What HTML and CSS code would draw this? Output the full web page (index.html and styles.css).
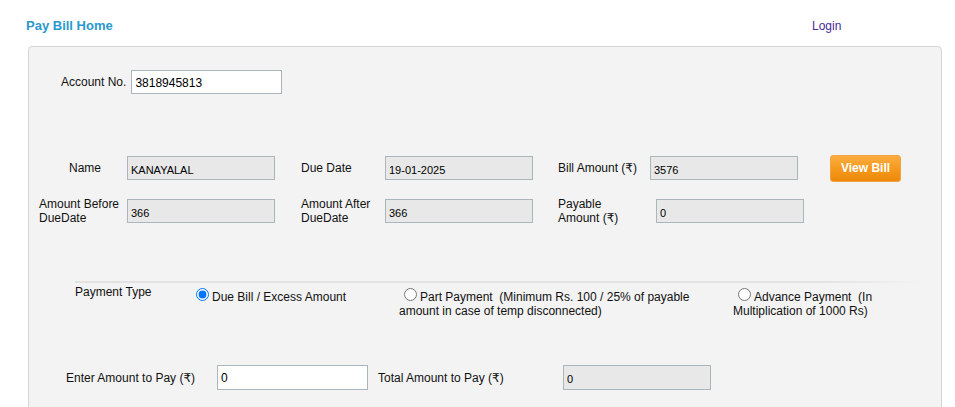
FILE: index.html
```html
<!DOCTYPE html>
<html lang="en">
<head>
<meta charset="utf-8">
<title>Pay Bill Home</title>
<link rel="stylesheet" href="styles.css">
</head>
<body>
<div class="header">
  <div class="title">Pay Bill Home</div>
  <a class="login" href="#">Login</a>
</div>
<div class="panel">
  <div class="row row-acct">
    <label class="lbl lbl-acct">Account No.</label>
    <input class="inp inp-edit" type="text" value="3818945813">
  </div>

  <div class="row row-1">
    <label class="lbl c1 c1-name">Name</label>
    <input class="inp inp-ro" type="text" readonly value="KANAYALAL">
    <label class="lbl c2">Due Date</label>
    <input class="inp inp-ro" type="text" readonly value="19-01-2025">
    <label class="lbl c3 c3-bill">Bill Amount (₹)</label>
    <input class="inp inp-ro" type="text" readonly value="3576">
    <button class="btn" type="button">View Bill</button>
  </div>

  <div class="row row-2">
    <label class="lbl c1 c1-before">Amount Before<br>DueDate</label>
    <input class="inp inp-ro" type="text" readonly value="366">
    <label class="lbl c2">Amount After<br>DueDate</label>
    <input class="inp inp-ro" type="text" readonly value="366">
    <label class="lbl c3 c3-pay">Payable<br>Amount (₹)</label>
    <input class="inp inp-ro" type="text" readonly value="0">
  </div>

  <div class="sep"></div>

  <div class="pay-row">
    <div class="lbl pt-label">Payment Type</div>
    <label class="opt opt-1"><input class="radio" type="radio" name="ptype" checked>Due Bill / Excess Amount</label>
    <label class="opt opt-2"><input class="radio" type="radio" name="ptype">Part Payment&nbsp; (Minimum Rs. 100 / 25% of payable amount in case of temp disconnected)</label>
    <label class="opt opt-3"><input class="radio" type="radio" name="ptype">Advance Payment&nbsp; (In Multiplication of 1000 Rs)</label>
  </div>

  <div class="row row-amt">
    <label class="lbl lbl-enter">Enter Amount to Pay (₹)</label>
    <input class="inp inp-edit inp-tall" type="text" value="0">
    <label class="lbl lbl-total">Total Amount to Pay (₹)</label>
    <input class="inp inp-ro inp-tall" type="text" readonly value="0">
  </div>
</div>
</body>
</html>
```
FILE: styles.css
```css
* {
  box-sizing: border-box;
}

html, body {
  margin: 0;
  padding: 0;
  background: #ffffff;
}

body {
  font-family: "Liberation Sans", Arial, "DejaVu Sans", sans-serif;
  font-size: 12px;
  color: #111111;
}

.header {
  display: flex;
  align-items: baseline;
  height: 46px;
  padding: 18px 0 0 26px;
}

.title {
  width: 786px;
  font-size: 13px;
  font-weight: bold;
  color: #2a98cf;
}

.login {
  font-size: 12px;
  color: #4b2a96;
  text-decoration: none;
}

.panel {
  margin-left: 28px;
  width: 914px;
  border: 1px solid #d6d6d6;
  border-radius: 4px;
  background: #f3f3f3;
  padding-bottom: 30px;
}

.row {
  display: flex;
  align-items: center;
  height: 24px;
}

.lbl {
  flex: none;
  line-height: normal;
}

.row-acct {
  margin-top: 23px;
  margin-left: 32px;
}

.lbl-acct {
  margin-right: 5px;
}

.inp {
  flex: none;
  margin: 0;
  height: 24px;
  border: 1px solid #aab5bc;
  border-radius: 0;
  font-family: "Liberation Sans", Arial, sans-serif;
  color: #000000;
  outline: none;
}

.inp-edit {
  width: 151px;
  background: #ffffff;
  font-size: 12px;
  padding: 1px 3px 0 3px;
}

.inp-ro {
  width: 148px;
  background: #e8e8e8;
  font-size: 11px;
  padding: 3px 3px 0 3px;
}

.inp-tall {
  height: 25px;
}

.row-1 {
  margin-top: 62px;
}

.row-2 {
  margin-top: 19px;
}

.c1 {
  width: 98px;
}

.c1-name {
  padding-left: 40px;
}

.c1-before {
  padding-left: 10px;
}

.c2 {
  width: 110px;
  padding-left: 26px;
}

.c3 {
  padding-left: 25px;
}

.c3-bill {
  width: 117px;
}

.c3-pay {
  width: 123px;
}

.btn {
  flex: none;
  margin-left: 32px;
  width: 71px;
  height: 27px;
  padding: 0;
  border: 1px solid #f0a444;
  border-radius: 3px;
  background: linear-gradient(to bottom, #fbad40 0%, #f59a1f 50%, #ee8909 100%);
  color: #ffffff;
  font-family: "Liberation Sans", Arial, sans-serif;
  font-size: 12px;
  font-weight: bold;
  cursor: pointer;
}

.sep {
  margin-top: 58px;
  margin-left: 46px;
  width: 845px;
  height: 2px;
  background: linear-gradient(to right, #e2e2e2 0%, #e2e2e2 88%, rgba(226, 226, 226, 0) 100%);
}

.pay-row {
  display: flex;
  align-items: flex-start;
  margin-top: 2px;
  margin-left: 46px;
  height: 40px;
  line-height: normal;
}

.pt-label {
  width: 116px;
}

.opt {
  flex: none;
}

.opt-1 {
  width: 208px;
}

.opt-2 {
  width: 300px;
  margin-right: 34px;
}

.opt-3 {
  width: 170px;
}

.radio {
  margin: 3px 3px 0 5px;
}

.row-amt {
  margin-top: 40px;
  margin-left: 37px;
  height: 25px;
}

.lbl-enter {
  width: 151px;
}

.lbl-total {
  width: 185px;
  margin-left: 10px;
}
```
